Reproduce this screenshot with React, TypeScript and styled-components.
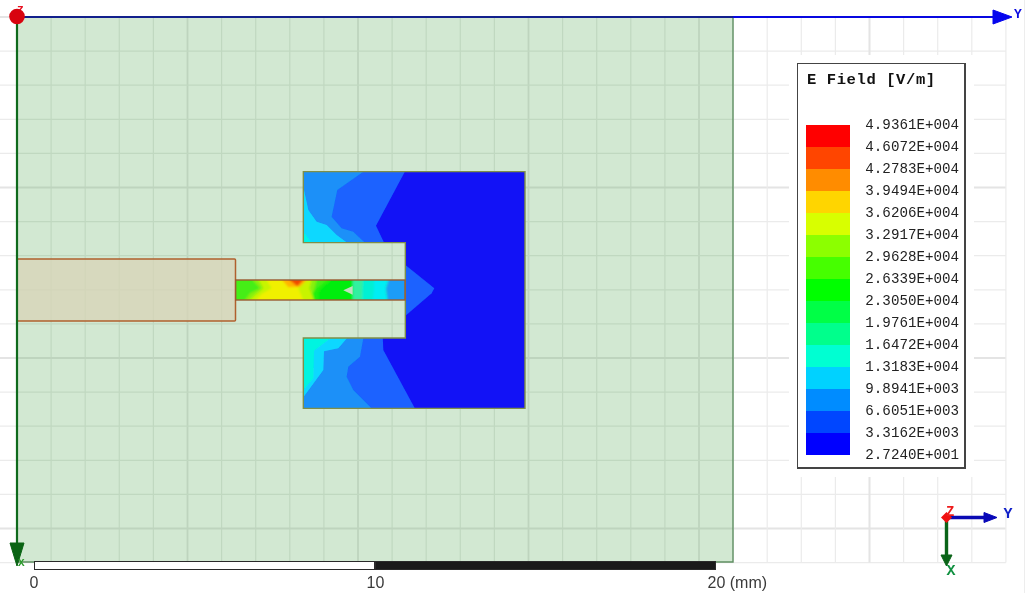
import React from "react";
import styled, { createGlobalStyle } from "styled-components";

const GlobalStyle = createGlobalStyle`
  html, body { margin: 0; padding: 0; background: #fff; }
  body { width: 1025px; height: 593px; overflow: hidden; }
`;

const Page = styled.div`
  position: relative;
  width: 1025px;
  height: 593px;
  background: #fff;
  overflow: hidden;
  font-family: "Liberation Sans", Arial, sans-serif;
  border-right: 1px solid #ededed;
  box-sizing: border-box;
  filter: blur(0.35px);
`;

const PlotCanvas = styled.svg`
  display: block;
  width: 1025px;
  height: 593px;
`;

const Legend = styled.aside`
  position: absolute;
  left: 797px;
  top: 63px;
  width: 169px;
  height: 406px;
  box-sizing: border-box;
  background: #fff;
  border: 1px solid #444;
  border-right-width: 2px;
  border-bottom-width: 2px;
  box-shadow: 0 0 0 8px #fff;
  padding: 7px 5px 0 8px;
  display: flex;
  flex-direction: column;
  font-family: "Liberation Mono", "DejaVu Sans Mono", monospace;
`;

const LegendTitle = styled.div`
  height: 18px;
  line-height: 18px;
  margin-left: 1px;
  font-size: 15.5px;
  font-weight: 700;
  letter-spacing: 0.6px;
  color: #111;
  white-space: nowrap;
`;

const LegendBody = styled.div`
  margin-top: 25px;
  display: flex;
  justify-content: space-between;
`;

const ColorRamp = styled.div`
  margin-top: 11px;
  width: 44px;
  display: flex;
  flex-direction: column;
`;

const RampBand = styled.div<{ $color: string }>`
  height: 22px;
  background: ${(p) => p.$color};
`;

const ValueList = styled.div`
  display: flex;
  flex-direction: column;
  align-items: flex-end;
`;

const Value = styled.div`
  height: 22px;
  line-height: 22px;
  font-size: 14.2px;
  color: #222;
  white-space: nowrap;
`;

const ScaleRuler = styled.div`
  position: absolute;
  left: 34px;
  top: 561px;
  width: 682px;
`;

const ScaleTrack = styled.div`
  display: flex;
  height: 9px;
`;

const ScaleSegment = styled.div<{ $dark?: boolean }>`
  flex: 1;
  box-sizing: border-box;
  background: ${(p) => (p.$dark ? "#1a1a1a" : "#fff")};
  border: 1px solid #2a2a2a;
`;

const ScaleLabels = styled.div`
  position: relative;
  height: 24px;
`;

const ScaleLabel = styled.span<{ $at: number }>`
  position: absolute;
  left: ${(p) => p.$at}px;
  top: 4px;
  transform: translateX(-4.5px);
  font-size: 16px;
  line-height: 18px;
  color: #3a3a3a;
  white-space: nowrap;
`;

const STEP = 34.1;
const X0 = 17;
const Y0 = 17;
const xAt = (k: number) => X0 + k * STEP;
const yAt = (k: number) => Y0 + k * STEP;

const xs = Array.from({ length: 30 }, (_, i) => i);
const ys = Array.from({ length: 17 }, (_, i) => i);

const RAMP = [
  "#ff0000", "#ff4500", "#ff8c00", "#ffd500", "#d8ff00",
  "#8cff00", "#46ff00", "#00ff00", "#00ff46", "#00ff8c",
  "#00ffd2", "#00d2ff", "#008cff", "#0046ff", "#0000ff",
];

const VALUES = [
  "4.9361E+004", "4.6072E+004", "4.2783E+004", "3.9494E+004",
  "3.6206E+004", "3.2917E+004", "2.9628E+004", "2.6339E+004",
  "2.3050E+004", "1.9761E+004", "1.6472E+004", "1.3183E+004",
  "9.8941E+003", "6.6051E+003", "3.3162E+003", "2.7240E+001",
];

const PATCH = "250,35 915,35 915,745 250,745 250,534 556,534 556,248 250,248";

const FIELD: [string, string][] = [
  // upper arm
  ["#1a62ff", "430,25 560,25 468,197 497,258 240,258 240,25"],
  ["#1a90f8", "240,25 445,25 352,90 335,170 365,205 400,215 445,258 240,258"],
  ["#10d8ff", "240,60 250,80 265,150 290,185 320,195 350,225 395,258 240,258"],
  ["#00f4ea", "240,200 250,215 282,258 240,258"],
  // lower arm
  ["#1a62ff", "240,524 488,524 490,570 590,755 240,755"],
  ["#1a90f8", "240,524 432,524 420,590 385,620 380,650 400,690 465,755 240,755"],
  ["#10d8ff", "240,524 390,524 355,565 312,574 310,630 250,712 240,722"],
  ["#00f4e0", "240,524 345,524 282,572 280,655 250,690 240,700"],
  // bump behind the feed
  ["#1a62ff", "546,307 643,385 635,400 546,476"],
];

const STRIP: [string, string][] = [
  ["#44ee18", "20,340 580,340 580,440 20,440"],
  ["#88f008", "80,340 295,340 280,400 300,440 60,440 90,400 120,385"],
  ["#c8f400", "105,340 280,340 268,385 290,440 70,440 105,405 130,385"],
  ["#f0f000", "130,345 262,345 235,385 258,440 90,440 125,402 155,385"],
  ["#ffb400", "170,340 280,340 240,380 205,382"],
  ["#f04800", "190,345 265,345 232,379"],
  ["#20f010", "290,385 345,340 400,340 400,440 285,440 278,400"],
  ["#00ee10", "305,385 355,345 398,345 398,440 300,440 295,400"],
  ["#30f0a0", "398,340 465,340 452,440 398,440"],
  ["#00f0d4", "430,340 480,340 465,440 425,440"],
  ["#00eef4", "462,340 512,340 498,385 505,440 455,440 462,390"],
  ["#1a9cf8", "512,340 580,340 580,440 505,440 498,385"],
];

function Arrow({ points, color }: { points: string; color: string }) {
  return <polygon points={points} fill={color} stroke={color} strokeLinejoin="round" />;
}

export default function App() {
  return (
    <Page>
      <GlobalStyle />
      <PlotCanvas viewBox="0 0 1025 593" role="img">
        <defs>
          <clipPath id="patchClip">
            <polygon points={PATCH} />
          </clipPath>
          <clipPath id="stripClip">
            <rect x={47} y={360} width={508} height={60} />
          </clipPath>
          <filter id="soft" x="-5%" y="-5%" width="110%" height="110%">
            <feGaussianBlur stdDeviation="1.5" />
          </filter>
          <filter id="softer" x="-5%" y="-5%" width="110%" height="110%">
            <feGaussianBlur stdDeviation="3" />
          </filter>
        </defs>

        {/* outer grid, on white */}
        {ys.map((k) => (
          <line key={`wh${k}`} x1={0} x2={xAt(29)} y1={yAt(k)} y2={yAt(k)} stroke={k % 5 === 0 ? "#e4e4e4" : "#ebebeb"} strokeWidth={k % 5 === 0 ? 2 : 1.2} />
        ))}
        {xs.map((k) => (
          <line key={`wv${k}`} x1={xAt(k)} x2={xAt(k)} y1={Y0} y2={yAt(16)} stroke={k % 5 === 0 ? "#e4e4e4" : "#ebebeb"} strokeWidth={k % 5 === 0 ? 2 : 1.2} />
        ))}

        {/* substrate */}
        <rect x={17} y={17} width={716} height={545} fill="#d2e8d2" />
        {xs.filter((k) => k > 0 && k < 21).map((k) => (
          <line key={`gv${k}`} x1={xAt(k)} x2={xAt(k)} y1={17} y2={562} stroke={k % 5 === 0 ? "#bed4be" : "#c0d8c0"} strokeWidth={k % 5 === 0 ? 1.8 : 1.2} />
        ))}
        {ys.filter((k) => k > 0 && k < 16).map((k) => (
          <line key={`gh${k}`} x1={17} x2={733} y1={yAt(k)} y2={yAt(k)} stroke={k % 5 === 0 ? "#bed4be" : "#c0d8c0"} strokeWidth={k % 5 === 0 ? 1.8 : 1.2} />
        ))}
        <path d="M733 17V562H17" fill="none" stroke="#5f8f62" strokeWidth={1.4} />

        {/* feed pad, translucent over the grid */}
        <rect x={17} y={259} width={218.5} height={62} rx={1} fill="#d8d4b7" fillOpacity={0.75} stroke="#b0602e" strokeWidth={1.5} />

        {/* patch with field plot */}
        <g transform="translate(220 160) scale(0.33333)">
          <polygon points={PATCH} fill="#1212f6" />
          <g clipPath="url(#patchClip)">
            <g filter="url(#soft)">
              {FIELD.map(([c, p], i) => (
                <polygon key={i} points={p} fill={c} />
              ))}
            </g>
          </g>
          <polygon points={PATCH} fill="none" stroke="#7f8f48" strokeWidth={4.2} />
          <g clipPath="url(#stripClip)">
            <g filter="url(#softer)">
              {STRIP.map(([c, p], i) => (
                <polygon key={i} points={p} fill={c} />
              ))}
            </g>
            <polygon points="370,391 398,378 398,404" fill="#c4dcc0" />
          </g>
          <rect x={47} y={360} width={508} height={60} fill="none" stroke="#9a5a30" strokeWidth={4.2} />
        </g>

        {/* main axes */}
        <line x1={17} x2={733} y1={17} y2={17} stroke="#12208c" strokeWidth={2.2} />
        <line x1={733} x2={996} y1={17} y2={17} stroke="#0808e0" strokeWidth={2.2} />
        <Arrow points="993,10 1012,17 993,24" color="#0505ee" />
        <text x={1014} y={17.5} fill="#0a0ae0" fontFamily="Liberation Mono, monospace" fontWeight={700} fontSize={13}>Y</text>
        <line x1={17} x2={17} y1={17} y2={546} stroke="#0f6a1c" strokeWidth={2.2} />
        <Arrow points="10,543 24,543 17,566" color="#0a6414" />
        <text x={18} y={566} fill="#2a9a2a" fontFamily="Liberation Mono, monospace" fontWeight={700} fontSize={11}>X</text>
        <text x={17} y={13} fill="#e81020" fontFamily="Liberation Mono, monospace" fontWeight={700} fontSize={11}>Z</text>
        <circle cx={17} cy={16.5} r={7.8} fill="#d8040f" />

        {/* orientation triad */}
        <line x1={947} x2={988} y1={517.5} y2={517.5} stroke="#0a0ab4" strokeWidth={3.6} />
        <Arrow points="984,512.5 997,517.5 984,522.5" color="#0808b8" />
        <line x1={946.5} x2={946.5} y1={518} y2={556} stroke="#0a6418" strokeWidth={3.4} />
        <Arrow points="941,555 952,555 946.5,566" color="#0a6418" />
        <polygon points="946.5,512 952,517.5 946.5,523 941,517.5" fill="#f01010" />
        <text x={946} y={516} fill="#ee1c1c" fontFamily="Liberation Mono, monospace" fontWeight={700} fontSize={14}>Z</text>
        <text x={1003.5} y={518} fill="#1020c8" fontFamily="Liberation Mono, monospace" fontWeight={700} fontSize={15}>Y</text>
        <text x={946.5} y={575} fill="#109040" fontFamily="Liberation Mono, monospace" fontWeight={700} fontSize={15}>X</text>
      </PlotCanvas>

      <Legend>
        <LegendTitle>E Field [V/m]</LegendTitle>
        <LegendBody>
          <ColorRamp>
            {RAMP.map((c) => (
              <RampBand key={c} $color={c} />
            ))}
          </ColorRamp>
          <ValueList>
            {VALUES.map((v) => (
              <Value key={v}>{v}</Value>
            ))}
          </ValueList>
        </LegendBody>
      </Legend>

      <ScaleRuler>
        <ScaleTrack>
          <ScaleSegment />
          <ScaleSegment $dark />
        </ScaleTrack>
        <ScaleLabels>
          <ScaleLabel $at={0}>0</ScaleLabel>
          <ScaleLabel $at={337}>10</ScaleLabel>
          <ScaleLabel $at={678}>20 (mm)</ScaleLabel>
        </ScaleLabels>
      </ScaleRuler>
    </Page>
  );
}
